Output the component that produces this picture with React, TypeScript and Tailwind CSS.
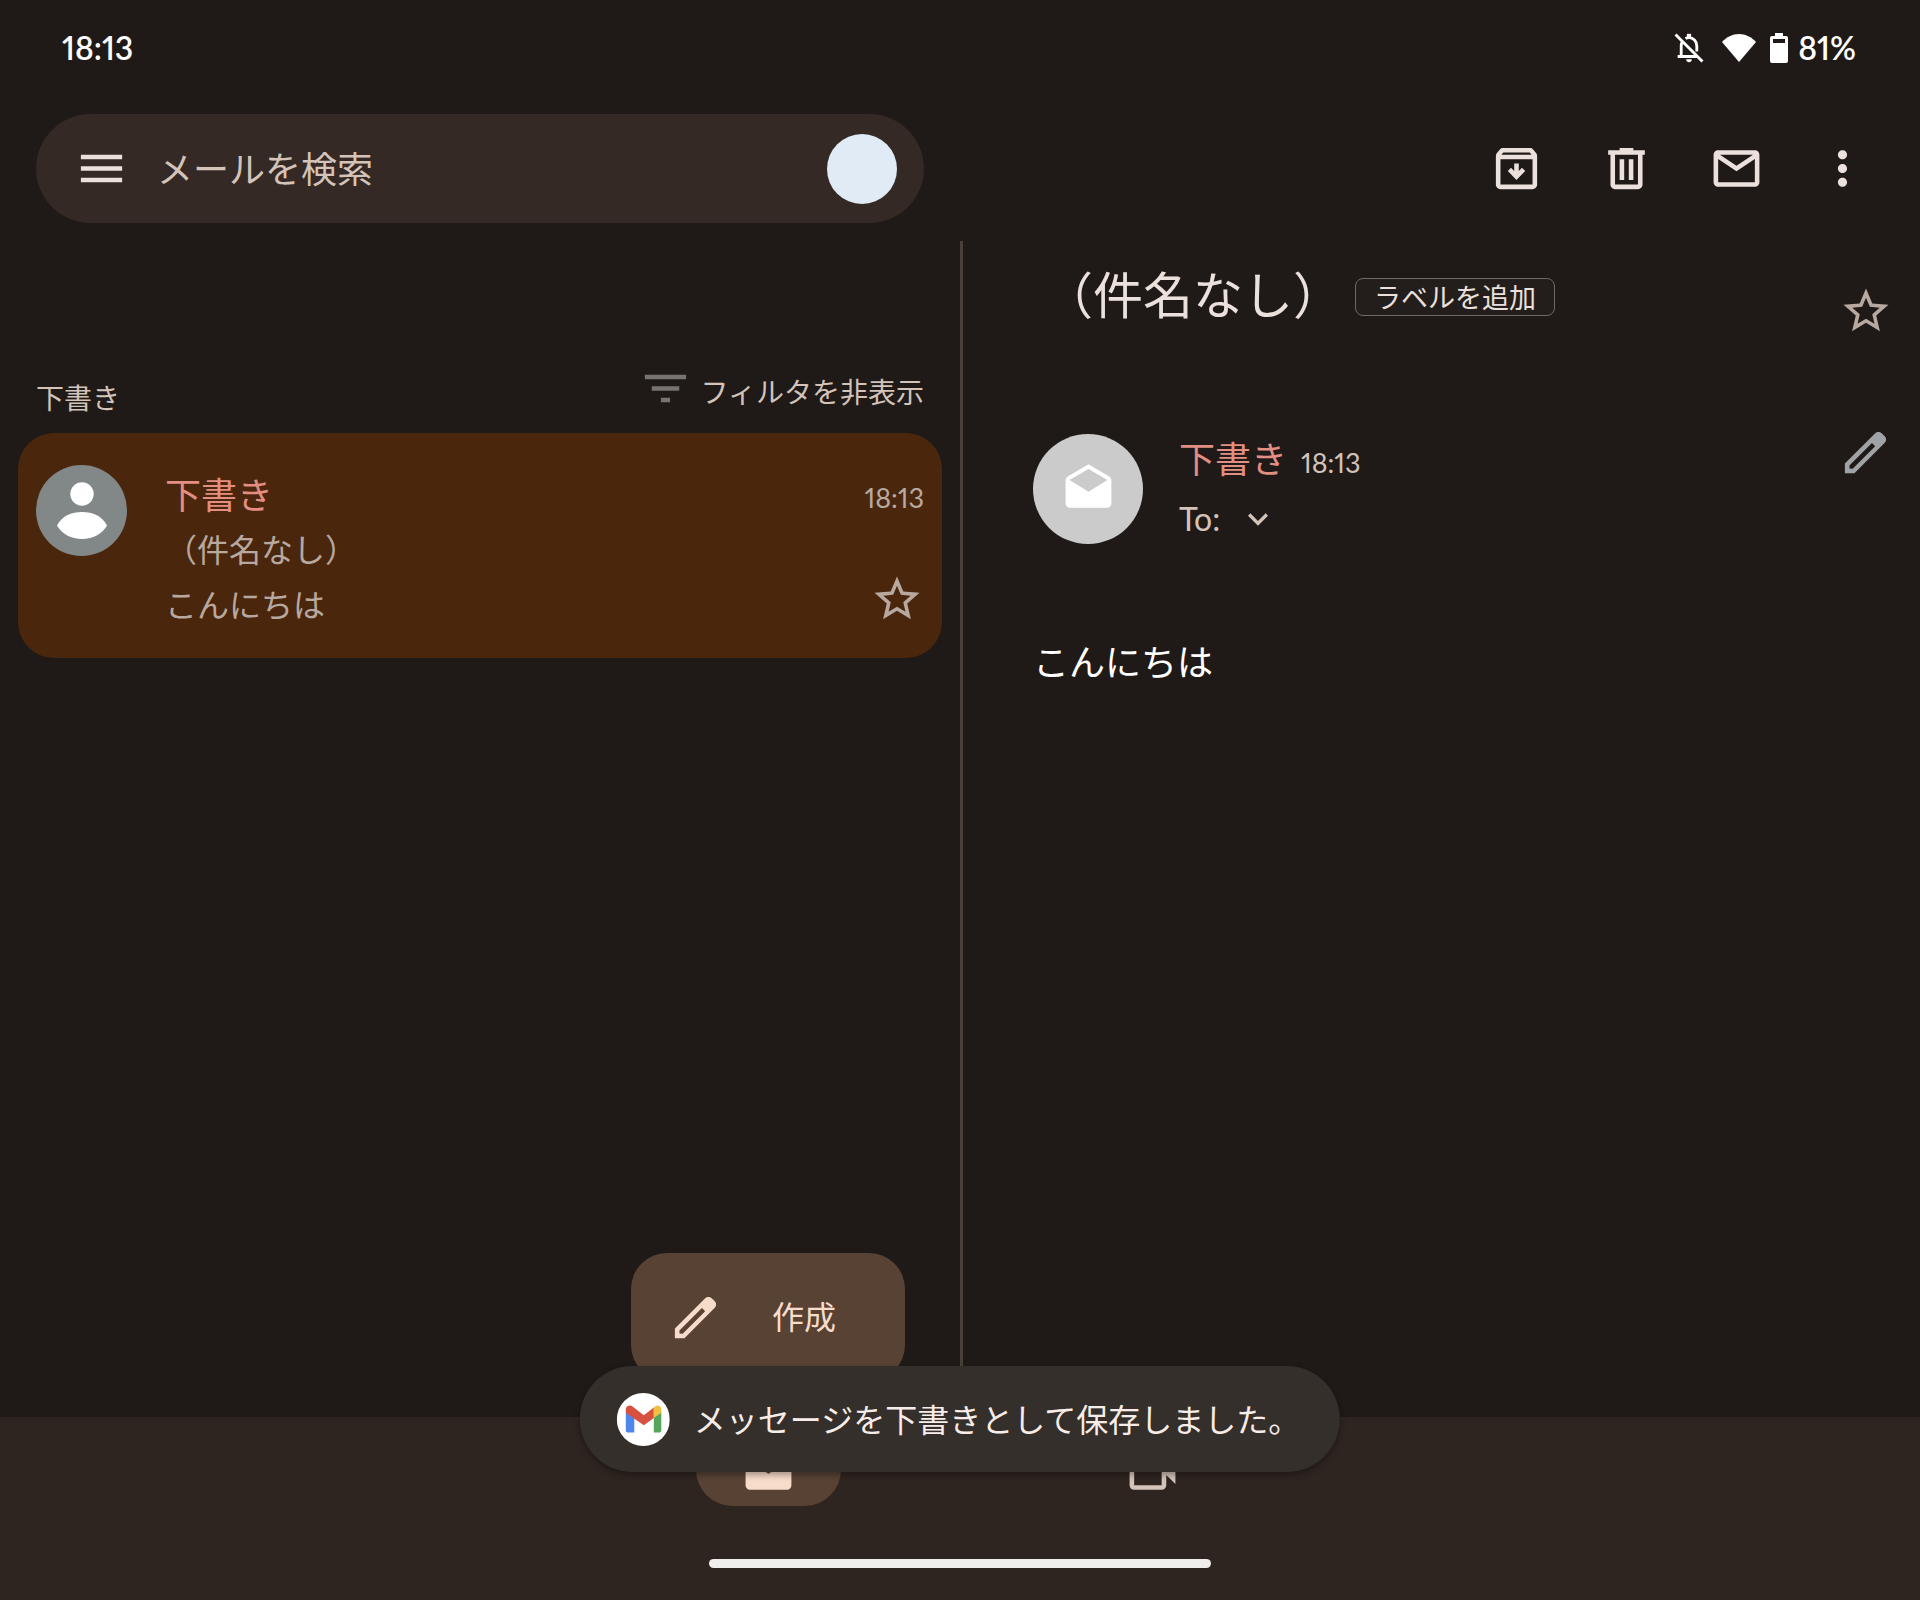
import type { ReactNode } from 'react';

type IconProps = { size?: number; className?: string; children: ReactNode };

function Icon({ size = 55, className = '', children }: IconProps) {
  return (
    <svg width={size} height={size} viewBox="0 0 24 24" fill="currentColor" className={`shrink-0 ${className}`} aria-hidden="true">
      {children}
    </svg>
  );
}

const StarIcon = () => (
  <Icon size={54}>
    <path d="M22 9.24l-7.19-.62L12 2 9.19 8.63 2 9.24l5.46 4.73L5.82 21 12 17.27 18.18 21l-1.63-7.03L22 9.24zM12 15.4l-3.76 2.27 1-4.28-3.32-2.88 4.38-.38L12 6.1l1.71 4.04 4.38.38-3.32 2.88 1 4.28L12 15.4z" />
  </Icon>
);

const PencilIcon = () => (
  <Icon>
    <path fillRule="evenodd" d="M20.41 4.94l-1.35-1.35c-.78-.78-2.05-.78-2.83 0L3 16.82V21h4.18L20.41 7.77c.79-.78.79-2.05 0-2.83zM6.41 19.06L5 19v-1.36l9.82-9.82 1.41 1.41-9.82 9.83z" />
  </Icon>
);

// ─── Status bar ────────────────────────────────────────────
function StatusBar() {
  return (
    <div className="flex h-24 items-center justify-between pr-16 pl-[62px] font-[Lato,sans-serif] text-[32px] leading-none font-semibold text-white proportional-nums">
      <span>18:13</span>
      <div className="flex items-center">
        <svg width="34" height="34" viewBox="0 0 24 24" fill="none" stroke="currentColor" strokeWidth="2" aria-hidden="true">
          <path d="M2.5 2.5l19 19" />
          <path d="M4 18h14M6.5 18v-7.5c0-1 .2-1.9.6-2.7M9.5 5.3c.7-.4 1.6-.6 2.5-.6 3 0 5.500 2.4 5.500 5.8v4" />
          <path d="M12 2v3" strokeWidth="3" />
          <path d="M10 20h4a2 2 0 0 1-4 0z" fill="currentColor" stroke="none" />
        </svg>
        <svg width="34" height="28" viewBox="0 0 34 28" fill="currentColor" className="ml-4" aria-hidden="true">
          <path d="M17 28L0 8C4.5 3 10.5 0 17 0s12.5 3 17 8z" />
        </svg>
        <svg width="18" height="30" viewBox="0 0 18 30" fill="currentColor" className="mr-[10px] ml-[14px]" aria-hidden="true">
          <path fillRule="evenodd" d="M5 0h8v3h3a2 2 0 0 1 2 2v23a2 2 0 0 1-2 2H2a2 2 0 0 1-2-2V5a2 2 0 0 1 2-2h3zM3 6v4h12V6z" />
        </svg>
        <span>81%</span>
      </div>
    </div>
  );
}

// ─── Top bar: search + message actions ─────────────────────
function SearchBar() {
  return (
    <div className="w-1/2 px-9">
      <div className="flex h-[109px] items-center rounded-full bg-[#342924] pr-[27px] pl-[38px]">
        <button aria-label="メニュー" className="text-[#ebe0dc]">
          <Icon><path d="M3 18h18v-2H3v2zm0-5h18v-2H3v2zm0-7v2h18V6H3z" /></Icon>
        </button>
        <input
          type="text" aria-label="メールを検索" placeholder="メールを検索"
          className="ml-7 h-16 min-w-0 flex-1 bg-transparent pb-1 text-[36px] text-[#d3c3b9] outline-none placeholder:text-[#d3c3b9]"
        />
        <button aria-label="アカウント" className="size-[70px] rounded-full bg-[#e1ebf5]" />
      </div>
    </div>
  );
}

function MessageActions() {
  return (
    <div className="flex w-1/2 items-center justify-end gap-[55px] pr-[55px] text-[#ebe0dc]">
      <button aria-label="アーカイブ">
        <Icon>
          <path d="M20.54 5.23l-1.39-1.68C18.88 3.21 18.47 3 18 3H6c-.47 0-.88.21-1.16.55L3.46 5.23C3.17 5.57 3 6.02 3 6.5V19c0 1.1.9 2 2 2h14c1.1 0 2-.9 2-2V6.5c0-.48-.17-.93-.46-1.27zM6.24 5h11.52l.83 1H5.42l.82-1zM5 19V8h14v11H5z" />
          <path d="M11 9.8h2v3.3l1.4-1.4 1.4 1.4L12 17l-3.8-3.9 1.4-1.4 1.4 1.4z" />
        </Icon>
      </button>
      <button aria-label="削除">
        <Icon>
          <path fillRule="evenodd" d="M15 4V3H9v1H4v2h1v13c0 1.1.9 2 2 2h10c1.1 0 2-.9 2-2V6h1V4h-5zm2 15H7V6h10v13zM9 8h2v9H9zm4 0h2v9h-2z" />
        </Icon>
      </button>
      <button aria-label="未読にする">
        <Icon>
          <path d="M20 4H4c-1.1 0-2 .9-2 2v12c0 1.1.9 2 2 2h16c1.1 0 2-.9 2-2V6c0-1.1-.9-2-2-2zm-.8 2L12 10.8 4.8 6h14.4zM4 18V7.87l8 5.33 8-5.33V18H4z" />
        </Icon>
      </button>
      <button aria-label="その他" className="flex w-[46px] justify-center">
        <Icon>
          <path d="M12 8c1.1 0 2-.9 2-2s-.9-2-2-2-2 .9-2 2 .9 2 2 2zm0 2c-1.1 0-2 .9-2 2s.9 2 2 2 2-.9 2-2-.9-2-2-2zm0 6c-1.1 0-2 .9-2 2s.9 2 2 2 2-.9 2-2-.9-2-2-2z" />
        </Icon>
      </button>
    </div>
  );
}

// ─── Draft list ────────────────────────────────────────────
function DraftList() {
  return (
    <section className="relative w-1/2">
      <div className="flex h-48 items-end justify-between px-9 pb-3 text-[28px] text-[#d3c3b9]">
        <h2 className="pb-1 leading-10">下書き</h2>
        <button className="flex items-start gap-2">
          <Icon className="text-[#777371]"><path d="M10 18h4v-2h-4v2zM3 6v2h18V6H3zm3 7h12v-2H6v2z" /></Icon>
          <span className="leading-[60px]">フィルタを非表示</span>
        </button>
      </div>

      <article className="mx-[18px] flex rounded-[36px] bg-[#4a260d] px-[18px] pt-8 pb-[27px]">
        <svg width="91" height="91" viewBox="0 0 91 91" className="shrink-0" aria-hidden="true">
          <circle cx="45.5" cy="45.5" r="45.5" fill="#828788" />
          <circle cx="46" cy="29" r="11.7" fill="#fff" />
          <path d="M21 60.5C26 51 35 47 46 47s20 4 25 13.5C66 69 57 74 46 74s-20-5-25-13.5z" fill="#fff" />
        </svg>
        <div className="ml-[38px] flex-1 text-[32px] leading-[55px] text-[#b8a9a0]">
          <h3 className="text-[36px] leading-[56px] text-[#e28e82]">下書き</h3>
          <p>（件名なし）</p>
          <p>こんにちは</p>
        </div>
        <div className="flex flex-col items-end justify-between pb-[5px] text-[#b8a9a0]">
          <time className="font-[Lato,sans-serif] text-[27px] leading-[66px] proportional-nums">18:13</time>
          <button aria-label="スターを付ける"><StarIcon /></button>
        </div>
      </article>

      <button className="absolute right-[55px] bottom-9 flex h-32 w-[274px] items-center rounded-[36px] bg-[#584233] pl-[37px] text-[32px] text-[#f8dccb]">
        <PencilIcon />
        <span className="ml-[49px] pb-1">作成</span>
      </button>
    </section>
  );
}

// ─── Opened message ────────────────────────────────────────
function Message() {
  return (
    <section className="w-1/2 pt-[14px] pr-[27px] pl-[73px]">
      <div className="flex items-start">
        <h1 className="pl-[10px] text-[50px] leading-[74px] text-[#ebe0dc]">（件名なし）</h1>
        <button className="mt-[23px] ml-3 rounded-lg border border-[#6f6a68] bg-[#231e1b] px-[18px] text-[27px] leading-9 text-[#ebe0dc]">
          ラベルを追加
        </button>
        <button aria-label="スターを付ける" className="mt-[29px] ml-auto text-[#b8a9a0]"><StarIcon /></button>
      </div>

      <div className="mt-[87px] flex items-start">
        <div className="mt-[9px] flex size-[110px] items-center justify-center rounded-full bg-[#cbcbcb] text-white">
          <Icon>
            <path d="M21.99 8c0-.72-.37-1.35-.94-1.7L12 1 2.95 6.3C2.38 6.65 2 7.28 2 8v10c0 1.1.9 2 2 2h16c1.1 0 2-.9 2-2l-.01-10zM12 13L3.74 7.84 12 3l8.26 4.84L12 13z" />
          </Icon>
        </div>
        <div className="ml-9 pt-[2px] text-[#d3c3b9]">
          <div className="flex items-baseline gap-[14px] leading-[60px]">
            <span className="text-[36px] text-[#e28e82]">下書き</span>
            <time className="font-[Lato,sans-serif] text-[27px] proportional-nums">18:13</time>
          </div>
          <button className="flex items-center gap-[18px] font-[Lato,sans-serif] text-[32px] leading-[52px]">
            To:
            <Icon size={40}><path d="M7.41 8.59L12 13.17l4.59-4.58L18 10l-6 6-6-6z" /></Icon>
          </button>
        </div>
        <button aria-label="編集" className="ml-auto text-[#9fa3a5]"><PencilIcon /></button>
      </div>

      <p className="mt-[88px] text-[36px] leading-[54px] text-white">こんにちは</p>
    </section>
  );
}

// ─── Bottom navigation ─────────────────────────────────────
function BottomNav() {
  return (
    <nav className="flex flex-col items-center bg-[#2f2520] pt-4 pb-8">
      <div className="flex">
        <a href="#mail" aria-label="メール" className="flex w-96 justify-center">
          <span className="flex h-[73px] w-[145px] items-center justify-center rounded-full bg-[#584233] pt-1 text-[#f8dccb]">
            <Icon><path d="M20 4H4c-1.1 0-1.99.9-1.99 2L2 18c0 1.1.9 2 2 2h16c1.1 0 2-.9 2-2V6c0-1.1-.9-2-2-2zm0 4l-8 5-8-5V6l8 5 8-5v2z" /></Icon>
          </span>
        </a>
        <a href="#meet" aria-label="Meet" className="flex w-96 items-center justify-center pt-1 text-[#d3c3b9]">
          <Icon><path fillRule="evenodd" d="M4 4h12a2 2 0 0 1 2 2v4.5l4-4v11l-4-4V18a2 2 0 0 1-2 2H4a2 2 0 0 1-2-2V6a2 2 0 0 1 2-2zm0 2v12h12V6z" /></Icon>
        </a>
      </div>
      <div className="mt-[53px] h-[9px] w-[502px] rounded-full bg-[#efeeec]" />
    </nav>
  );
}

function Toast() {
  return (
    <div role="status" className="absolute bottom-32 left-1/2 flex h-[106px] -translate-x-1/2 items-center rounded-full bg-[#352f2b] pr-10 pl-[37px] text-[32px] whitespace-nowrap text-[#f7ece8] shadow-[0_3px_6px_rgba(0,0,0,0.35)]">
      <svg width="53" height="53" viewBox="0 0 53 53" aria-hidden="true">
        <circle cx="26.5" cy="26.5" r="26.5" fill="#fff" />
        <path d="M9 19v18.5a2 2 0 0 0 2 2h6.5V24z" fill="#4f86ec" />
        <path d="M44.5 19v18.5a2 2 0 0 1-2 2H37V24z" fill="#58a55c" />
        <path d="M9 16.5c0-3.5 4-5.2 6.8-3L27 22.3 37 14.6V25l-10 7.3L9 19.8z" fill="#d85140" />
        <path d="M37 14.6l1.3-1.1c2.5-2 6.2-.5 6.2 3v3.3L37 25z" fill="#f1bf42" />
      </svg>
      <span className="ml-6 pb-[2px]">メッセージを下書きとして保存しました。</span>
    </div>
  );
}

export default function App() {
  return (
    <div className="relative flex min-h-screen flex-col bg-[#1f1a17] font-['Noto_Sans_CJK_JP',sans-serif]">
      <StatusBar />
      <header className="flex h-[145px] items-center">
        <SearchBar />
        <MessageActions />
      </header>
      <main className="flex flex-1">
        <DraftList />
        <div className="-mr-[3px] w-[3px] bg-[#4a403a]" />
        <Message />
      </main>
      <BottomNav />
      <Toast />
    </div>
  );
}
